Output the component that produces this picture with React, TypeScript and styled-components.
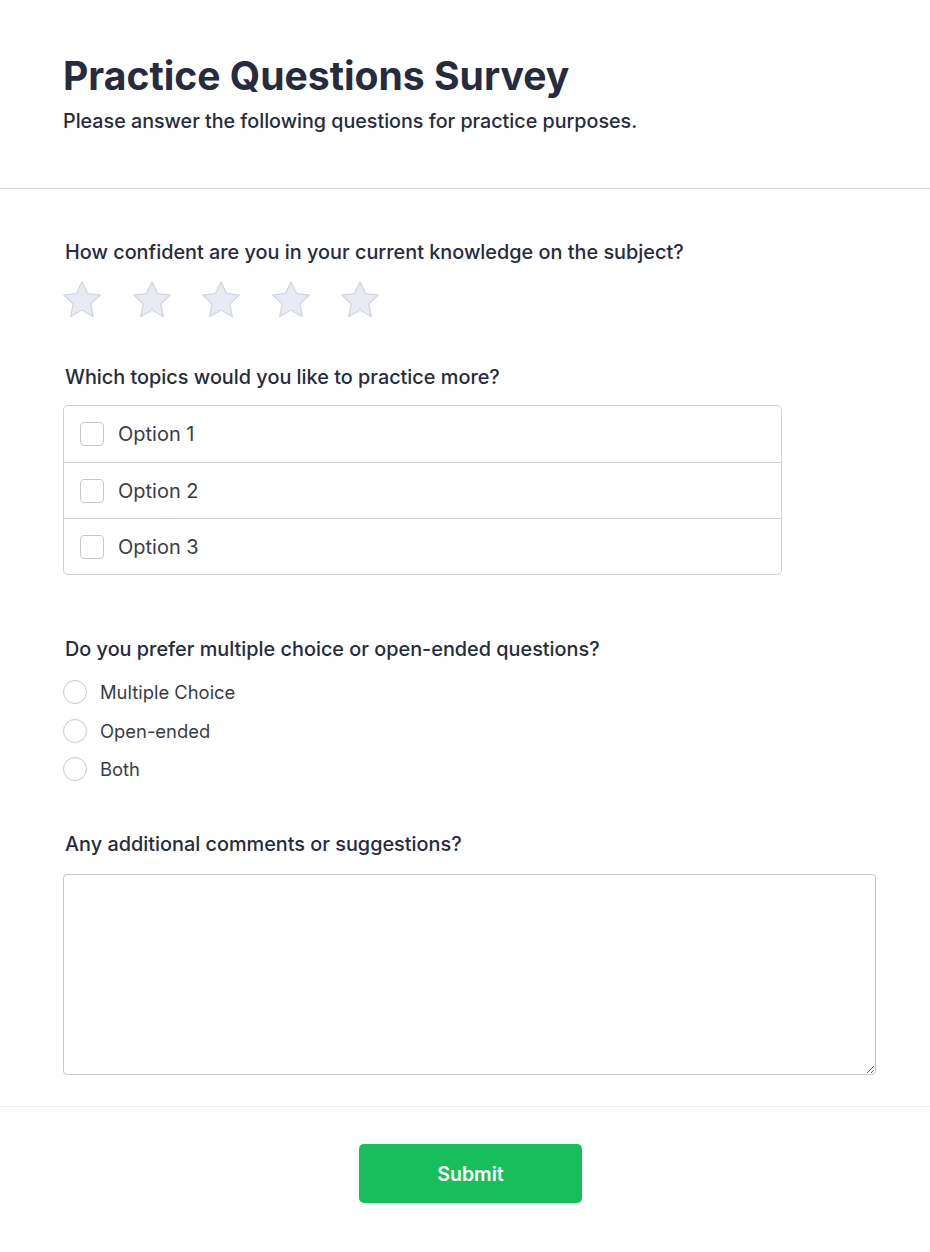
import { createGlobalStyle } from 'styled-components';
import styled from 'styled-components';

const GlobalStyle = createGlobalStyle`
  body { margin: 0; background: #fff; font-family: Inter, "Noto Sans", sans-serif; color: #2b2f42; }
  * { box-sizing: border-box; }
`;

const questions = {
    topics: ['Option 1', 'Option 2', 'Option 3'],
    format: ['Multiple Choice', 'Open-ended', 'Both'],
};

const Star = () => (
    <svg width="38" height="36" viewBox="2.4 2.4 19.2 18.5">
        <path
            d="M12 2.8l2.85 6 6.5.8-4.8 4.5 1.25 6.5L12 17.35l-5.8 3.25 1.25-6.5-4.8-4.5 6.5-.8z"
            fill="#e8eaf3"
            stroke="#cdd1df"
            strokeWidth="0.55"
            strokeLinejoin="round"
        />
    </svg>
);

const App = () => {
    return (
        <Page>
            <GlobalStyle />
            <Header>
                <Title>Practice Questions Survey</Title>
                <Subtitle>Please answer the following questions for practice purposes.</Subtitle>
            </Header>

            <Body>
                <Question $gap={17} $after={48}>
                    <Label>How confident are you in your current knowledge on the subject?</Label>
                    <Stars>
                        {[1, 2, 3, 4, 5].map(n => <StarButton key={n} aria-label={`${n} stars`}><Star /></StarButton>)}
                    </Stars>
                </Question>

                <Question $gap={16} $after={62}>
                    <Label>Which topics would you like to practice more?</Label>
                    <CheckGroup>
                        {questions.topics.map(t => (
                            <CheckRow key={t}>
                                <CheckBox type="checkbox" />
                                {t}
                            </CheckRow>
                        ))}
                    </CheckGroup>
                </Question>

                <Question $gap={19} $after={51}>
                    <Label>Do you prefer multiple choice or open-ended questions?</Label>
                    <RadioList>
                        {questions.format.map(f => (
                            <RadioRow key={f}>
                                <Radio type="radio" name="format" />
                                {f}
                            </RadioRow>
                        ))}
                    </RadioList>
                </Question>

                <Question $gap={18} $after={0}>
                    <Label>Any additional comments or suggestions?</Label>
                    <Comments />
                </Question>
            </Body>

            <Footer>
                <Submit type="button">Submit</Submit>
            </Footer>
        </Page>
    );
};

const Page = styled.div`
  width: 930px;
  min-height: 1252px;
  background: #fff;
`;

const Header = styled.header`
  padding: 50px 63px 54px;
  border-bottom: 1px solid #d8d9e4;
`;

const Title = styled.h1`
  margin: 0;
  font-size: 39.1px;
  line-height: 52px;
  font-weight: 700;
  color: #272b3e;
`;

const Subtitle = styled.p`
  margin: 6px 0 0;
  font-size: 19.7px;
  line-height: 26px;
  font-weight: 500;
  color: #272b3e;
`;

const Body = styled.main`
  padding: 51px 54px 31px 63px;
  display: flex;
  flex-direction: column;
`;

const Question = styled.section<{ $gap: number; $after: number }>`
  display: flex;
  flex-direction: column;
  gap: ${p => p.$gap}px;
  margin-bottom: ${p => p.$after}px;
`;

const Label = styled.div`
  padding-left: 2px;
  font-size: 19.85px;
  line-height: 24px;
  font-weight: 500;
  color: #272b3e;
`;

const Stars = styled.div`
  display: flex;
  gap: 31.5px;
`;

const StarButton = styled.button`
  display: flex;
  border: 0;
  background: none;
  padding: 0;
  cursor: pointer;
`;

const CheckGroup = styled.div`
  width: 719px;
  border: 1px solid #cfd0d6;
  border-radius: 5px;
  overflow: hidden;
`;

const CheckRow = styled.label`
  display: flex;
  align-items: center;
  gap: 14px;
  height: 56px;
  padding: 0 16px;
  font-size: 20px;
  color: #3a3d4a;
  & + & { border-top: 1px solid #cfd0d6; }
`;

const CheckBox = styled.input`
  appearance: none;
  margin: 0;
  width: 24px;
  height: 24px;
  border: 1px solid #c6c8d0;
  border-radius: 4px;
  background: #fff;
`;

const RadioList = styled.div`
  display: flex;
  flex-direction: column;
  gap: 14.5px;
`;

const RadioRow = styled.label`
  display: flex;
  align-items: center;
  gap: 13px;
  height: 24px;
  font-size: 18.4px;
  color: #3a3d4a;
`;

const Radio = styled.input`
  appearance: none;
  margin: 0;
  width: 24px;
  height: 24px;
  border: 1px solid #c6c8d0;
  border-radius: 50%;
  background: #fff;
`;

const Comments = styled.textarea`
  width: 813px;
  height: 201px;
  border: 1px solid #c5c7d4;
  border-radius: 4px;
  font-family: inherit;
  font-size: 16px;
  padding: 10px;
`;

const Footer = styled.footer`
  border-top: 1px solid #eceef4;
  padding: 37px 54px 40px 65px;
  display: flex;
  justify-content: center;
`;

const Submit = styled.button`
  width: 223px;
  height: 59px;
  border: 0;
  border-radius: 5px;
  background: #19be5c;
  color: #fff;
  font-family: inherit;
  font-size: 19.5px;
  font-weight: 600;
  cursor: pointer;
`;

export default App;
